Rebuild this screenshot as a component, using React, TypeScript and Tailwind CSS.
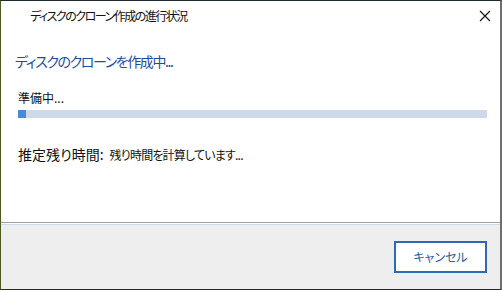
import React from "react";

const jp = "[font-family:'Noto_Sans_CJK_JP','Noto_Sans',sans-serif] [font-feature-settings:'palt']";

const CloseIcon = () => (
  <svg width="12" height="12" viewBox="0 0 12 12" className="block">
    <path d="M1 1 L11 11 M11 1 L1 11" stroke="#111" strokeWidth="1.1" />
  </svg>
);

export default function App() {
  return (
    <div className={`w-[502px] h-[290px] flex flex-col bg-white border-l border-l-[#4b5a22] border-t border-t-[#1e2a30] border-r-2 border-r-[#6f6f6f] border-b border-b-[#232a1c] ${jp}`}>
      {/* title bar */}
      <div className="h-[29px] flex items-center justify-between pl-[29px] pr-[9px]">
        <span className="text-[12px] text-[#111] tracking-[-1.5px] leading-none">
          ディスクのクローン作成の進行状況
        </span>
        <CloseIcon />
      </div>

      {/* content */}
      <div className="flex-1 flex flex-col pl-[14px] pr-[13px]">
        <div className="mt-[24px] text-[14px] text-[#1c4c9e] leading-none tracking-[-1.4px]">
          ディスクのクローンを作成中...
        </div>
        <div className="mt-[24px] pl-[3px] text-[12px] text-[#111] leading-none">準備中...</div>
        <div className="mt-[6px] ml-[3px] h-[8px] bg-[#cdd9e9] flex">
          <div className="w-[8px] h-full bg-[#4a8ad5]" />
        </div>
        <div className="mt-[29px] pl-[3px] flex items-baseline gap-[6px] text-[#111] leading-none">
          <span className="text-[14px]">推定残り時間:</span>
          <span className="text-[12px] tracking-[-0.8px]">残り時間を計算しています...</span>
        </div>
      </div>

      {/* separator + footer */}
      <div className="h-px bg-[#a0a0a0]" />
      <div className="h-px bg-white" />
      <div className="h-px bg-[#cfdbe9]" />
      <div className="h-[64px] bg-[#eeeeee] flex justify-end items-start pt-[16px] pr-[13px]">
        <button className="w-[93px] h-[32px] border-2 border-[#2f68b4] bg-white text-[12px] text-[#2d5b9c] flex items-center justify-center">
          キャンセル
        </button>
      </div>
    </div>
  );
}
